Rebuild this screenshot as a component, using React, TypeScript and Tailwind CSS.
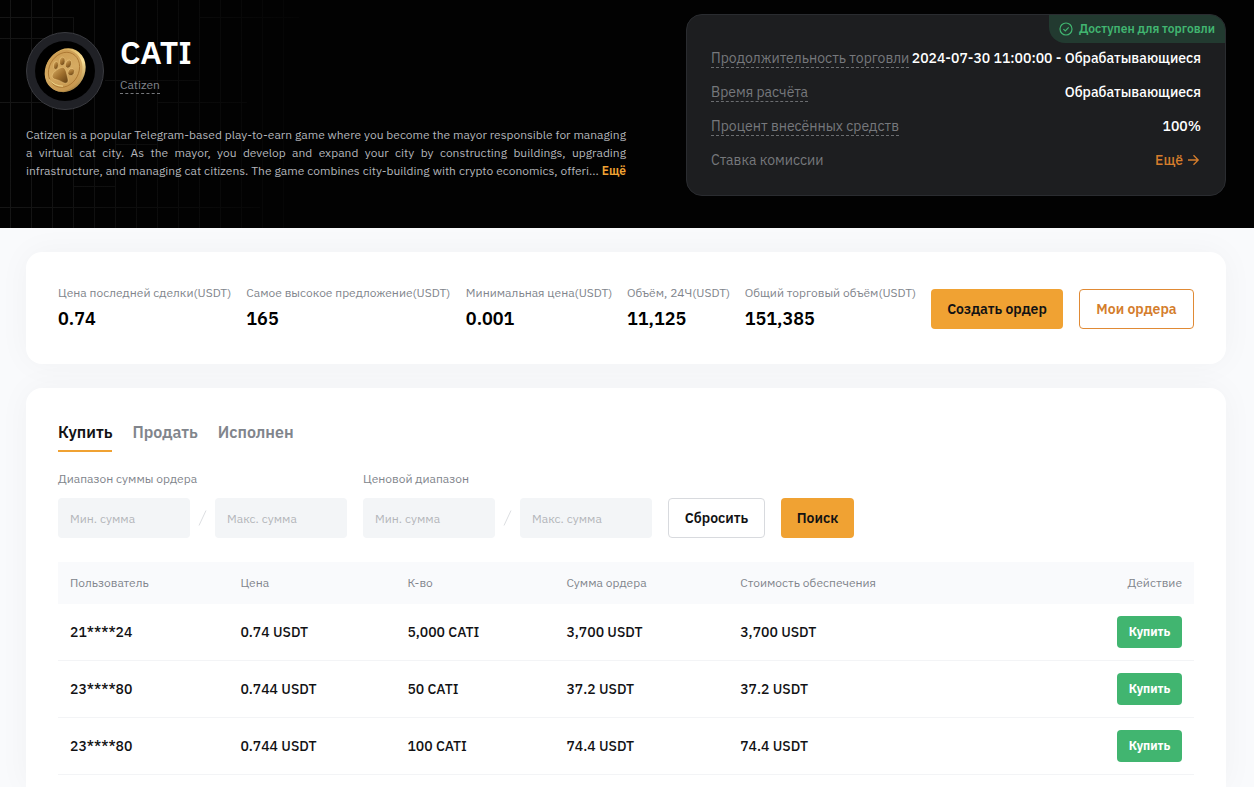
import type { ReactNode } from "react";

const stats = [
  { label: "Цена последней сделки(USDT)", value: "0.74" },
  { label: "Самое высокое предложение(USDT)", value: "165" },
  { label: "Минимальная цена(USDT)", value: "0.001" },
  { label: "Объём, 24Ч(USDT)", value: "11,125" },
  { label: "Общий торговый объём(USDT)", value: "151,385" },
];

const orders = [
  { user: "21****24", price: "0.74 USDT", qty: "5,000 CATI", sum: "3,700 USDT", collateral: "3,700 USDT" },
  { user: "23****80", price: "0.744 USDT", qty: "50 CATI", sum: "37.2 USDT", collateral: "37.2 USDT" },
  { user: "23****80", price: "0.744 USDT", qty: "100 CATI", sum: "74.4 USDT", collateral: "74.4 USDT" },
];

function GridBackdrop() {
  const columns = [10, 31, 52, 94, 115, 136, 157, 178, 199, 220, 241, 262, 283];
  return (
    <svg className="absolute left-0 top-0 h-full w-80" viewBox="0 0 320 228" preserveAspectRatio="xMinYMin slice" aria-hidden="true">
      <defs>
        <linearGradient id="fade" x1="0" x2="320" y1="0" y2="0" gradientUnits="userSpaceOnUse">
          <stop offset="0" stopColor="#161616" />
          <stop offset="0.4" stopColor="#0e0e0e" />
          <stop offset="1" stopColor="#040404" />
        </linearGradient>
      </defs>
      <g fill="url(#fade)">
        {columns.map((x) => (
          <rect key={x} x={x} y="0" width="1" height="228" />
        ))}
        <rect x="73" y="17" width="1" height="211" />
        <rect x="0" y="17" width="74" height="1" />
        <rect x="199" y="17" width="100" height="1" />
        <rect x="0" y="38" width="52" height="1" />
        <rect x="105" y="80" width="94" height="1" />
        <rect x="0" y="102" width="74" height="1" />
        <rect x="157" y="102" width="90" height="1" />
        <rect x="115" y="144" width="43" height="1" />
        <rect x="73" y="186" width="43" height="1" />
        <rect x="0" y="207" width="260" height="1" />
      </g>
    </svg>
  );
}

function CoinLogo() {
  return (
    <svg className="size-[60px]" viewBox="0 0 60 60" role="img" aria-label="Catizen">
      <defs>
        <linearGradient id="edge" x1="0" y1="0" x2="1" y2="1">
          <stop offset="0" stopColor="#c9963f" />
          <stop offset="0.45" stopColor="#fbe39a" />
          <stop offset="1" stopColor="#8f6222" />
        </linearGradient>
        <linearGradient id="face" x1="0" y1="0" x2="1" y2="1">
          <stop offset="0" stopColor="#c8964c" />
          <stop offset="0.5" stopColor="#d6ab62" />
          <stop offset="1" stopColor="#bf8d45" />
        </linearGradient>
        <linearGradient id="paw" x1="0" y1="0" x2="1" y2="1">
          <stop offset="0" stopColor="#dcb066" />
          <stop offset="0.5" stopColor="#a0702e" />
          <stop offset="1" stopColor="#5f3c10" />
        </linearGradient>
      </defs>
      <circle cx="30" cy="30" r="30" fill="#000" />
      <ellipse cx="30.5" cy="29.2" rx="19.4" ry="22.6" fill="url(#edge)" transform="rotate(28 30.5 29.2)" />
      <ellipse cx="28.6" cy="29.6" rx="18.2" ry="21.4" fill="url(#face)" transform="rotate(28 28.6 29.6)" />
      <ellipse cx="29" cy="28.8" rx="14.8" ry="18.2" fill="none" stroke="#a8742f" strokeWidth="0.8" transform="rotate(28 29 28.8)" />
      <path d="M14 38.5 A18.5 18.5 0 0 0 28 45.2" fill="none" stroke="#f3dc8e" strokeWidth="0.9" />
      <g fill="url(#paw)" stroke="#f0cd85" strokeWidth="0.5">
        <ellipse cx="20.9" cy="24.4" rx="2.5" ry="4" transform="rotate(8 20.9 24.4)" />
        <ellipse cx="27.2" cy="20.3" rx="2.8" ry="4.2" transform="rotate(8 27.2 20.3)" />
        <ellipse cx="33.4" cy="23" rx="2.9" ry="4.2" transform="rotate(18 33.4 23)" />
        <ellipse cx="36.2" cy="31" rx="3.1" ry="3.9" transform="rotate(30 36.2 31)" />
        <path d="M26 26.6 C22.4 28 16.6 31.6 17.2 35.8 C17.6 38.4 20.8 38.2 23.8 39.4 C27.4 40.8 29.6 43.2 32 41.8 C34.2 40.2 32.4 36.2 31.8 33 C31 29.4 29.6 25.2 26 26.6Z" />
      </g>
    </svg>
  );
}

function InfoRow({ label, dashed = true, children }: { label: string; dashed?: boolean; children: ReactNode }) {
  return (
    <div className="flex h-5 items-end justify-between whitespace-nowrap text-sm leading-5">
      <dt
        className={
          dashed
            ? "border-b border-dashed border-[#6b6d70] leading-[17px] text-[#76787c]"
            : "text-[#76787c]"
        }
      >
        {label}
      </dt>
      <dd className="font-medium text-white">{children}</dd>
    </div>
  );
}

function RangeField({ id, label }: { id: string; label: string }) {
  const input =
    "h-10 w-[132px] rounded bg-[#f3f5f7] px-3 text-xs text-[#121214] placeholder:text-[#b3b5ba] outline-none";
  return (
    <fieldset>
      <legend className="mb-2.5 text-xs leading-[18px] text-[#81858c]">{label}</legend>
      <div className="flex items-center">
        <input id={`${id}-min`} aria-label={`${label}, мин.`} className={input} placeholder="Мин. сумма" />
        <svg className="mx-2 h-4 w-[9px]" viewBox="0 0 9 16" aria-hidden="true">
          <path d="M1 15.5 8 0.5" stroke="#dcdee2" fill="none" />
        </svg>
        <input id={`${id}-max`} aria-label={`${label}, макс.`} className={input} placeholder="Макс. сумма" />
      </div>
    </fieldset>
  );
}

export default function App() {
  return (
    <div className="flex min-h-screen flex-col bg-[#f9fafc] font-['IBM_Plex_Sans',Roboto,sans-serif] text-[#121214]">
      <header className="relative bg-[#020202] pb-8 pl-[26px] pr-7 pt-3.5">
        <GridBackdrop />
        <div className="relative flex justify-between gap-[60px]">
          <div className="max-w-[600px] flex-1 pt-[18px]">
            <div className="flex items-start gap-4">
              <div className="flex size-[78px] items-center justify-center rounded-full border border-[#3a3b40] bg-[#202126]">
                <CoinLogo />
              </div>
              <div className="flex flex-col items-start">
                <h1 className="text-[32px] font-semibold leading-10 text-white">CATI</h1>
                <span className="mt-1 border-b border-dashed border-[#76787c] text-xs leading-[17px] text-[#81858c]">Catizen</span>
              </div>
            </div>
            <p className="mt-4 text-justify text-xs leading-[18px] text-[#b3b5ba] [text-align-last:justify]">
              Catizen is a popular Telegram-based play-to-earn game where you become the mayor responsible for managing a
              virtual cat city. As the mayor, you develop and expand your city by constructing buildings, upgrading
              infrastructure, and managing cat citizens. The game combines city-building with crypto economics, offeri...{" "}
              <button type="button" className="font-semibold text-[#f0a233]">Ещё</button>
            </p>
          </div>
          <section className="relative w-[540px] overflow-hidden rounded-2xl border border-[#2a2c30] bg-[#1d1e20] px-6 pb-[25px] pt-[33px]">
            <div className="absolute right-0 top-0 flex h-7 items-center gap-1.5 rounded-bl-2xl bg-[#223a30] px-2.5 text-xs font-semibold text-[#41b570]">
              <svg className="size-3.5" viewBox="0 0 14 14" fill="none" stroke="currentColor" strokeWidth="1.2" aria-hidden="true">
                <circle cx="7" cy="7" r="6" />
                <path d="m4.4 7.1 1.9 1.8 3.4-3.6" />
              </svg>
              Доступен для торговли
            </div>
            <dl className="flex flex-col gap-3.5">
              <InfoRow label="Продолжительность торговли">2024-07-30 11:00:00 - Обрабатывающиеся</InfoRow>
              <InfoRow label="Время расчёта">Обрабатывающиеся</InfoRow>
              <InfoRow label="Процент внесённых средств">100%</InfoRow>
              <InfoRow label="Ставка комиссии" dashed={false}>
                <a href="#fees" className="flex items-center gap-1 text-[#d47d2c]">
                  Ещё
                  <svg className="size-3.5" viewBox="0 0 14 14" fill="none" stroke="currentColor" strokeWidth="1.3" aria-hidden="true">
                    <path d="M1 7h10M6.5 2.2 11.2 7 6.5 11.8" />
                  </svg>
                </a>
              </InfoRow>
            </dl>
          </section>
        </div>
      </header>

      <main className="flex flex-1 flex-col gap-6 overflow-hidden pl-[26px] pr-7 pt-6">
        <section className="flex items-center justify-between gap-3.5 rounded-2xl bg-white px-8 pb-[31px] pt-8 shadow-[0_0_32px_rgba(18,18,20,0.04)]">
          <dl className="grid flex-1 grid-cols-[173fr_204fr_146fr_103fr_171fr] gap-x-3.5 whitespace-nowrap">
            {stats.map((s) => (
              <div key={s.label}>
                <dt className="text-xs leading-[18px] text-[#81858c]">{s.label}</dt>
                <dd className="mt-[3px] text-lg font-semibold leading-7 text-black">{s.value}</dd>
              </div>
            ))}
          </dl>
          <div className="flex gap-4">
            <button type="button" className="h-10 w-[132px] rounded bg-[#f0a233] text-sm font-semibold">Создать ордер</button>
            <button type="button" className="h-10 w-[115px] rounded border border-[#e08a35] text-sm font-semibold text-[#d47d2c]">
              Мои ордера
            </button>
          </div>
        </section>

        <section className="flex-1 rounded-t-2xl bg-white px-8 pt-8 shadow-[0_0_32px_rgba(18,18,20,0.04)]">
          <nav className="flex gap-5 text-base font-semibold leading-6 text-[#81858c]">
            <button type="button" className="border-b-2 border-[#f0a233] pb-1.5 text-[#121214]">Купить</button>
            <button type="button" className="border-b-2 border-transparent pb-1.5">Продать</button>
            <button type="button" className="border-b-2 border-transparent pb-1.5">Исполнен</button>
          </nav>
          <form className="mt-[18px] flex items-end gap-4">
            <RangeField id="amount" label="Диапазон суммы ордера" />
            <RangeField id="price" label="Ценовой диапазон" />
            <button type="reset" className="h-10 w-[97px] rounded border border-[#d8dade] text-sm font-semibold">Сбросить</button>
            <button type="button" className="h-10 w-[73px] rounded bg-[#f0a233] text-sm font-semibold">Поиск</button>
          </form>
          <table className="mt-6 w-full table-fixed border-separate border-spacing-0 text-left">
            <colgroup>
              <col className="w-[15%]" />
              <col className="w-[14.7%]" />
              <col className="w-[14%]" />
              <col className="w-[15.3%]" />
              <col />
              <col className="w-[12%]" />
            </colgroup>
            <thead>
              <tr className="h-[42px] bg-[#f9fafc] text-xs text-[#81858c]">
                <th className="px-3 font-normal">Пользователь</th>
                <th className="px-3 font-normal">Цена</th>
                <th className="px-3 font-normal">К-во</th>
                <th className="px-3 font-normal">Сумма ордера</th>
                <th className="px-3 font-normal">Стоимость обеспечения</th>
                <th className="px-3 text-right font-normal">Действие</th>
              </tr>
            </thead>
            <tbody>
              {orders.map((o, i) => (
                <tr key={i} className="h-[57px] text-sm font-medium *:border-b *:border-[#f3f4f6]">
                  <td className="px-3">{o.user}</td>
                  <td className="px-3">{o.price}</td>
                  <td className="px-3">{o.qty}</td>
                  <td className="px-3">{o.sum}</td>
                  <td className="px-3">{o.collateral}</td>
                  <td className="px-3 text-right">
                    <button type="button" className="h-8 w-[65px] rounded bg-[#41b570] align-middle text-xs font-bold text-white">
                      Купить
                    </button>
                  </td>
                </tr>
              ))}
            </tbody>
          </table>
        </section>
      </main>
    </div>
  );
}
